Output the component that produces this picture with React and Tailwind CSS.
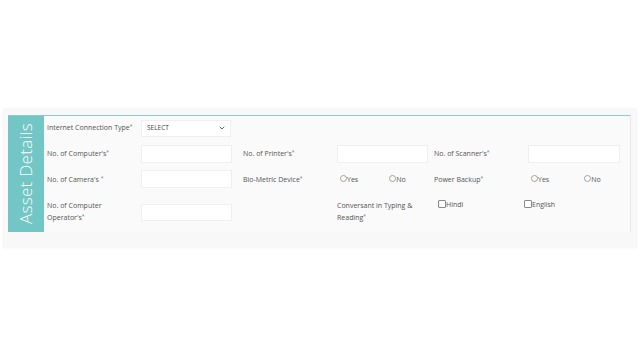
import { ChevronDown } from 'lucide-react'

const label = 'text-[7px] leading-[12px] text-[#555]'
const input = 'block h-full w-full border border-[#efefef] bg-white'
const row = 'grid grid-cols-[97px_97px_98px_97px_95px_1fr] items-center'

function Req() {
  return <sup className="top-[-2px] text-[5px] text-[#777]">*</sup>
}

function Radio({ text, className = '' }) {
  return (
    <span className={`inline-flex items-center ${className}`}>
      <span className="-mt-[3px] h-[7px] w-[7px] rounded-full border border-[#a0a0a0] bg-white" />
      <span className={label}>{text}</span>
    </span>
  )
}

function Check({ text, className = '' }) {
  return (
    <span className={`inline-flex items-center ${className}`}>
      <span className="-mt-[3px] h-[8px] w-[8px] rounded-[1px] border border-[#8a8a8a] bg-white" />
      <span className={label}>{text}</span>
    </span>
  )
}

function Field({ w = 'w-[91px]', h = 'h-[18px]', className = '' }) {
  return (
    <div className={`${w} ${h} ${className}`}>
      <input type="text" className={input} />
    </div>
  )
}

export default function App() {
  return (
    <div className="min-h-[360px] w-[640px] bg-white px-[3px] pt-[108px] font-['Open_Sans',sans-serif]">
      <div className="bg-[#f8f8f8] pb-[16px] pl-[5px] pr-[6px] pt-[7px] shadow-[0_0_2px_rgba(0,0,0,0.05)]">
        <div className="flex border-r border-t border-[#e8e8e8] border-t-[#8ccfc8] bg-[#fafafa]">
          <div className="flex w-[36px] shrink-0 items-center justify-center bg-[#72c6c6]">
            <span className="rotate-180 text-[17px] font-light tracking-[0.3px] text-white [writing-mode:vertical-rl]">
              Asset Details
            </span>
          </div>

          <div className="flex-1">
            <div className={`${row} h-[24px]`}>
              <span className={`${label} pl-[3px]`}>
                Internet Connection Type<Req />
              </span>
              <div className="flex h-[17px] w-[90px] items-center justify-between border border-[#efefef] bg-white pl-[5px] pr-[4px]">
                <span className="text-[6.5px] text-[#444]">SELECT</span>
                <ChevronDown size={8} strokeWidth={2.5} className="text-[#444]" />
              </div>
            </div>

            <div className={`${row} h-[27px]`}>
              <span className={`${label} pl-[3px]`}>
                No. of Computer's<Req />
              </span>
              <Field className="mt-[5px] self-start" />
              <span className={`${label} pl-[5px]`}>
                No. of Printer's<Req />
              </span>
              <div className="mt-[5px] self-start pl-[1px]">
                <Field />
              </div>
              <span className={`${label} pl-[1px]`}>
                No. of Scanner's<Req />
              </span>
              <Field w="w-[92px]" className="mt-[5px] self-start" />
            </div>

            <div className={`${row} h-[25px]`}>
              <span className={`${label} pl-[3px]`}>
                No. of Camera's <Req />
              </span>
              <Field className="mt-[3px] self-start" />
              <span className={`${label} pl-[5px]`}>
                Bio-Metric Device<Req />
              </span>
              <div className="flex pl-[4px]">
                <Radio text="Yes" />
                <Radio text="No" className="ml-[31px]" />
              </div>
              <span className={`${label} pl-[1px]`}>
                Power Backup<Req />
              </span>
              <div className="flex pl-[3px]">
                <Radio text="Yes" />
                <Radio text="No" className="ml-[35px]" />
              </div>
            </div>

            <div className={`${row} h-[40px]`}>
              <span className={`${label} pl-[3px]`}>
                No. of Computer
                <br />
                Operator's<Req />
              </span>
              <Field h="h-[17px]" className="mt-[12px] self-start" />
              <span />
              <span className={`${label} pl-[1px]`}>
                Conversant in Typing &amp;
                <br />
                Reading<Req />
              </span>
              <div className="mt-[7px] flex self-start pl-[5px]">
                <Check text="Hindi" />
              </div>
              <div className="-ml-[4px] mt-[7px] flex self-start">
                <Check text="English" />
              </div>
            </div>
          </div>
        </div>
      </div>
    </div>
  )
}
